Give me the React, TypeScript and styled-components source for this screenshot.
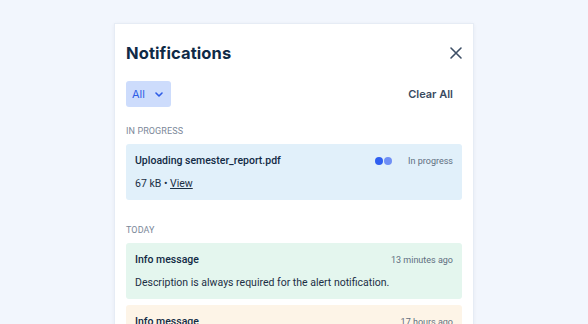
import styled, { createGlobalStyle } from "styled-components";

const GlobalStyle = createGlobalStyle`
    html, body {
        margin: 0;
        padding: 0;
        background: #f2f6fd;
        font-family: Roboto, "Liberation Sans", sans-serif;
        overflow: hidden;
    }
`;

const Page = styled.div`
    height: 324px;
    padding-top: 23px;
    box-sizing: border-box;
    overflow: hidden;
`;

const Panel = styled.section`
    display: flex;
    flex-direction: column;
    width: 360px;
    height: 320px;
    margin: 0 auto;
    background: #ffffff;
    border: 1px solid #e6ecf5;
    box-shadow: 0 1px 4px rgba(20, 40, 80, 0.05);
    box-sizing: border-box;
    padding: 0 11px;
`;

const Header = styled.header`
    display: flex;
    justify-content: space-between;
    align-items: center;
    height: 57px;
    flex-shrink: 0;
`;

const Title = styled.h1`
    margin: 0;
    font-family: Inter, "Noto Sans", sans-serif;
    font-size: 16.5px;
    font-weight: 700;
    color: #0f2a46;
    letter-spacing: 0.1px;
`;

const CloseButton = styled.button`
    border: none;
    background: none;
    padding: 0;
    margin-right: -1px;
    display: flex;
    color: #3d4f66;
`;

const Toolbar = styled.div`
    display: flex;
    justify-content: space-between;
    align-items: center;
    height: 26px;
    flex-shrink: 0;
`;

const Filter = styled.button`
    display: flex;
    align-items: center;
    gap: 10px;
    height: 26px;
    padding: 0 8px 0 6px;
    border: none;
    border-radius: 3px;
    background: #cddcfc;
    color: #2e5ce6;
    font-family: Inter, sans-serif;
    font-size: 11px;
    font-weight: 400;
`;

const ClearButton = styled.button`
    border: none;
    background: none;
    padding: 0;
    margin-right: 9px;
    font-family: Inter, sans-serif;
    font-size: 11px;
    font-weight: 600;
    color: #3a4a60;
`;

const SectionLabel = styled.div`
    margin: 19px 0 8px;
    font-size: 9px;
    line-height: 10px;
    color: #7b8899;
    letter-spacing: 0.1px;
    text-transform: uppercase;
    flex-shrink: 0;
`;

const Card = styled.div<{ $tone: string }>`
    background: ${(p) => p.$tone};
    border-radius: 3px;
    padding: 10px 9px 10px;
    margin-bottom: 6px;
    display: flex;
    flex-direction: column;
    gap: 10px;
    flex-shrink: 0;
`;

const CardTop = styled.div`
    display: flex;
    align-items: center;
`;

const CardTitle = styled.div`
    flex: 1;
    font-size: 10.5px;
    font-weight: 500;
    color: #112a44;
`;

const Meta = styled.span`
    font-size: 9px;
    color: #5f6e80;
`;

const Dots = styled.span`
    display: flex;
    gap: 1px;
    margin-right: 16px;
`;

const Dot = styled.span<{ $c: string }>`
    width: 8px;
    height: 8px;
    border-radius: 50%;
    background: ${(p) => p.$c};
`;

const Body = styled.div`
    font-size: 10.5px;
    color: #1c2f45;
    a {
        color: inherit;
        text-decoration: underline;
    }
`;

function App() {
    return (
        <Page>
            <GlobalStyle />
            <Panel>
                <Header>
                    <Title>Notifications</Title>
                    <CloseButton aria-label="Close">
                        <svg width="14" height="14" viewBox="0 0 14 14" fill="none" stroke="currentColor" strokeWidth="1.6" strokeLinecap="round">
                            <path d="M2 2l10 10M12 2L2 12" />
                        </svg>
                    </CloseButton>
                </Header>
                <Toolbar>
                    <Filter>
                        All
                        <svg width="8" height="5" viewBox="0 0 8 5" fill="none" stroke="currentColor" strokeWidth="1.6" strokeLinecap="round" strokeLinejoin="round">
                            <path d="M1 1l3 3 3-3" />
                        </svg>
                    </Filter>
                    <ClearButton>Clear All</ClearButton>
                </Toolbar>

                <SectionLabel>In progress</SectionLabel>
                <Card $tone="#e1f0fa">
                    <CardTop>
                        <CardTitle>Uploading semester_report.pdf</CardTitle>
                        <Dots>
                            <Dot $c="#2f5ff0" />
                            <Dot $c="#6f8ff5" />
                        </Dots>
                        <Meta>In progress</Meta>
                    </CardTop>
                    <Body>
                        67 kB • <a href="#">View</a>
                    </Body>
                </Card>

                <SectionLabel>Today</SectionLabel>
                <Card $tone="#e4f6ee">
                    <CardTop>
                        <CardTitle>Info message</CardTitle>
                        <Meta>13 minutes ago</Meta>
                    </CardTop>
                    <Body>Description is always required for the alert notification.</Body>
                </Card>
                <Card $tone="#fdf4e7">
                    <CardTop>
                        <CardTitle>Info message</CardTitle>
                        <Meta>17 hours ago</Meta>
                    </CardTop>
                    <Body>Description is always required for the alert notification.</Body>
                </Card>
            </Panel>
        </Page>
    );
}

export default App;
